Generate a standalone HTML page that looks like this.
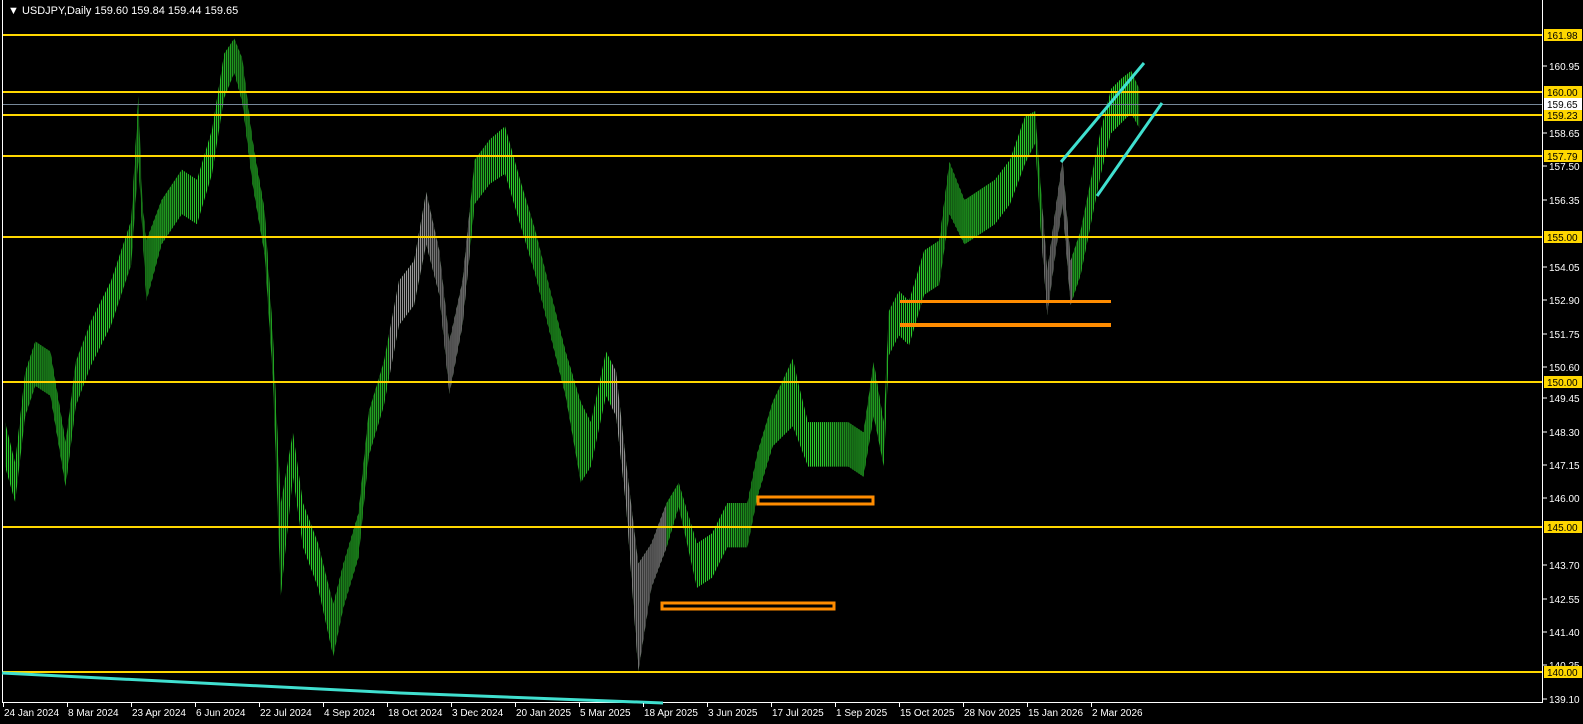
<!DOCTYPE html>
<html><head><meta charset="utf-8"><style>
html,body{margin:0;padding:0;background:#000;width:1583px;height:724px;overflow:hidden}
svg text{font-family:"Liberation Sans",sans-serif;font-size:10px}
</style></head><body>
<svg width="1583" height="724" xmlns="http://www.w3.org/2000/svg">
<defs>
<pattern id="pg" patternUnits="userSpaceOnUse" width="2" height="10"><rect x="0" y="0" width="1" height="10" fill="#2ee02e"/></pattern>
<pattern id="py" patternUnits="userSpaceOnUse" width="2" height="10"><rect x="0" y="0" width="1" height="10" fill="#a8a8a8"/></pattern>
<polygon id="env" points="5,418 15,458 25,368 35,338 50,348 65,438 75,358 90,318 110,278 130,218 137,95 141,200 145,238 160,198 180,168 195,178 210,128 222,53 232,38 240,58 250,138 262,208 270,328 278,498 290,428 300,498 315,538 330,598 340,558 355,508 365,408 380,358 395,278 410,258 422,190 435,248 445,338 458,278 470,158 485,138 500,125 515,178 530,228 545,288 560,348 575,398 585,418 600,348 610,368 620,458 632,558 645,538 660,498 672,478 690,538 705,528 720,498 740,498 750,448 765,398 785,355 790,378 800,418 820,418 840,418 855,428 865,358 875,418 880,308 890,288 900,298 915,248 930,238 940,160 955,198 970,188 985,178 1000,158 1015,115 1025,110 1030,178 1037,268 1045,208 1052,158 1060,258 1070,228 1080,178 1090,128 1100,88 1110,78 1120,70 1128,88 1128,127 1120,112 1110,122 1100,132 1090,172 1080,222 1070,272 1060,302 1052,202 1045,252 1037,312 1030,222 1025,142 1015,162 1000,202 985,222 970,232 955,242 940,212 930,282 915,292 900,342 890,332 880,352 875,462 865,412 855,472 840,462 820,462 800,462 785,422 765,442 750,492 740,542 720,542 705,572 690,582 672,502 660,542 645,582 632,665 620,502 610,412 600,392 585,462 575,478 560,392 545,332 530,272 515,222 500,172 485,182 470,202 458,322 445,390 435,292 422,242 410,302 395,322 380,402 365,452 355,552 340,602 330,650 315,582 300,542 290,472 278,590 270,372 262,252 250,182 240,102 232,72 222,97 210,172 195,222 180,212 160,242 145,298 137,160 130,262 110,322 90,362 75,402 65,482 50,392 35,382 25,412 15,497 5,462"/>
<clipPath id="cg"><rect x="385" y="0" width="80" height="724"/><rect x="605" y="0" width="55" height="724"/><rect x="1032" y="0" width="30" height="724"/></clipPath>
</defs>
<rect width="1583" height="724" fill="#000"/>
<g transform="scale(1.01)">
<use href="#env" fill="url(#pg)"/>
<use href="#env" fill="#000" clip-path="url(#cg)"/>
<use href="#env" fill="url(#py)" clip-path="url(#cg)"/>
</g>
<g fill="#ffd700">
<rect x="3" y="34" width="1539" height="2"/>
<rect x="3" y="91" width="1539" height="2"/>
<rect x="3" y="114" width="1539" height="2"/>
<rect x="3" y="155" width="1539" height="2"/>
<rect x="3" y="236" width="1539" height="2"/>
<rect x="3" y="381" width="1539" height="2"/>
<rect x="3" y="526" width="1539" height="2"/>
<rect x="3" y="671" width="1539" height="2"/>
</g>
<rect x="3" y="104" width="1539" height="1" fill="#778899"/>
<line x1="2.5" y1="0" x2="2.5" y2="703" stroke="#fff"/>
<line x1="1542.5" y1="0" x2="1542.5" y2="703" stroke="#fff"/>
<line x1="2" y1="702.5" x2="1543" y2="702.5" stroke="#fff"/>
<rect x="758" y="497" width="115" height="7" fill="none" stroke="#ff8c00" stroke-width="3"/>
<rect x="662" y="603" width="172" height="6" fill="none" stroke="#ff8c00" stroke-width="3"/>
<rect x="900" y="300" width="211" height="3" fill="#ff8c00"/>
<rect x="900" y="323" width="211" height="4" fill="#ff8c00"/>
<line x1="1061" y1="162" x2="1144" y2="63" stroke="#40e0d0" stroke-width="3"/>
<line x1="1097" y1="196" x2="1162" y2="103" stroke="#40e0d0" stroke-width="3"/>
<polyline points="2,673 400,693 663,703" fill="none" stroke="#40e0d0" stroke-width="3"/>
<g stroke="#fff">
<line x1="1543" x2="1547" y1="66" y2="66"/><line x1="1543" x2="1547" y1="133" y2="133"/><line x1="1543" x2="1547" y1="166" y2="166"/><line x1="1543" x2="1547" y1="200" y2="200"/><line x1="1543" x2="1547" y1="267" y2="267"/><line x1="1543" x2="1547" y1="300" y2="300"/><line x1="1543" x2="1547" y1="334" y2="334"/><line x1="1543" x2="1547" y1="367" y2="367"/><line x1="1543" x2="1547" y1="398" y2="398"/><line x1="1543" x2="1547" y1="432" y2="432"/><line x1="1543" x2="1547" y1="465" y2="465"/><line x1="1543" x2="1547" y1="498" y2="498"/><line x1="1543" x2="1547" y1="565" y2="565"/><line x1="1543" x2="1547" y1="599" y2="599"/><line x1="1543" x2="1547" y1="632" y2="632"/><line x1="1543" x2="1547" y1="665" y2="665"/><line x1="1543" x2="1547" y1="699" y2="699"/>
</g>
<g fill="#fff">
<text x="1549" y="70">160.95</text><text x="1549" y="137">158.65</text><text x="1549" y="170">157.50</text><text x="1549" y="204">156.35</text><text x="1549" y="271">154.05</text><text x="1549" y="304">152.90</text><text x="1549" y="338">151.75</text><text x="1549" y="371">150.60</text><text x="1549" y="402">149.45</text><text x="1549" y="436">148.30</text><text x="1549" y="469">147.15</text><text x="1549" y="502">146.00</text><text x="1549" y="569">143.70</text><text x="1549" y="603">142.55</text><text x="1549" y="636">141.40</text><text x="1549" y="669">140.25</text><text x="1549" y="703">139.10</text>
</g>
<g fill="#ffd700">
<rect x="1544" y="29" width="38" height="12"/><rect x="1544" y="86" width="38" height="12"/><rect x="1544" y="109" width="38" height="12"/><rect x="1544" y="150" width="38" height="12"/><rect x="1544" y="231" width="38" height="12"/><rect x="1544" y="376" width="38" height="12"/><rect x="1544" y="521" width="38" height="12"/><rect x="1544" y="666" width="38" height="12"/>
</g>
<rect x="1544" y="98" width="38" height="12" fill="#fff"/>
<g fill="#000">
<text x="1547" y="39">161.98</text><text x="1547" y="96">160.00</text><text x="1547" y="108">159.65</text><text x="1547" y="119">159.23</text><text x="1547" y="160">157.79</text><text x="1547" y="241">155.00</text><text x="1547" y="386">150.00</text><text x="1547" y="531">145.00</text><text x="1547" y="676">140.00</text>
</g>
<g stroke="#fff">
<line x1="3.5" x2="3.5" y1="703" y2="707"/><line x1="67.5" x2="67.5" y1="703" y2="707"/><line x1="131.5" x2="131.5" y1="703" y2="707"/><line x1="195.5" x2="195.5" y1="703" y2="707"/><line x1="259.5" x2="259.5" y1="703" y2="707"/><line x1="323.5" x2="323.5" y1="703" y2="707"/><line x1="387.5" x2="387.5" y1="703" y2="707"/><line x1="451.5" x2="451.5" y1="703" y2="707"/><line x1="515.5" x2="515.5" y1="703" y2="707"/><line x1="579.5" x2="579.5" y1="703" y2="707"/><line x1="643.5" x2="643.5" y1="703" y2="707"/><line x1="707.5" x2="707.5" y1="703" y2="707"/><line x1="771.5" x2="771.5" y1="703" y2="707"/><line x1="835.5" x2="835.5" y1="703" y2="707"/><line x1="899.5" x2="899.5" y1="703" y2="707"/><line x1="963.5" x2="963.5" y1="703" y2="707"/><line x1="1027.5" x2="1027.5" y1="703" y2="707"/><line x1="1091.5" x2="1091.5" y1="703" y2="707"/>
</g>
<g fill="#fff">
<text x="4" y="716">24 Jan 2024</text><text x="68" y="716">8 Mar 2024</text><text x="132" y="716">23 Apr 2024</text><text x="196" y="716">6 Jun 2024</text><text x="260" y="716">22 Jul 2024</text><text x="324" y="716">4 Sep 2024</text><text x="388" y="716">18 Oct 2024</text><text x="452" y="716">3 Dec 2024</text><text x="516" y="716">20 Jan 2025</text><text x="580" y="716">5 Mar 2025</text><text x="644" y="716">18 Apr 2025</text><text x="708" y="716">3 Jun 2025</text><text x="772" y="716">17 Jul 2025</text><text x="836" y="716">1 Sep 2025</text><text x="900" y="716">15 Oct 2025</text><text x="964" y="716">28 Nov 2025</text><text x="1028" y="716">15 Jan 2026</text><text x="1092" y="716">2 Mar 2026</text>
</g>
<text x="8" y="14" fill="#fff" style="font-size:11px">▼ USDJPY,Daily  159.60 159.84 159.44 159.65</text>
</svg>
</body></html>
